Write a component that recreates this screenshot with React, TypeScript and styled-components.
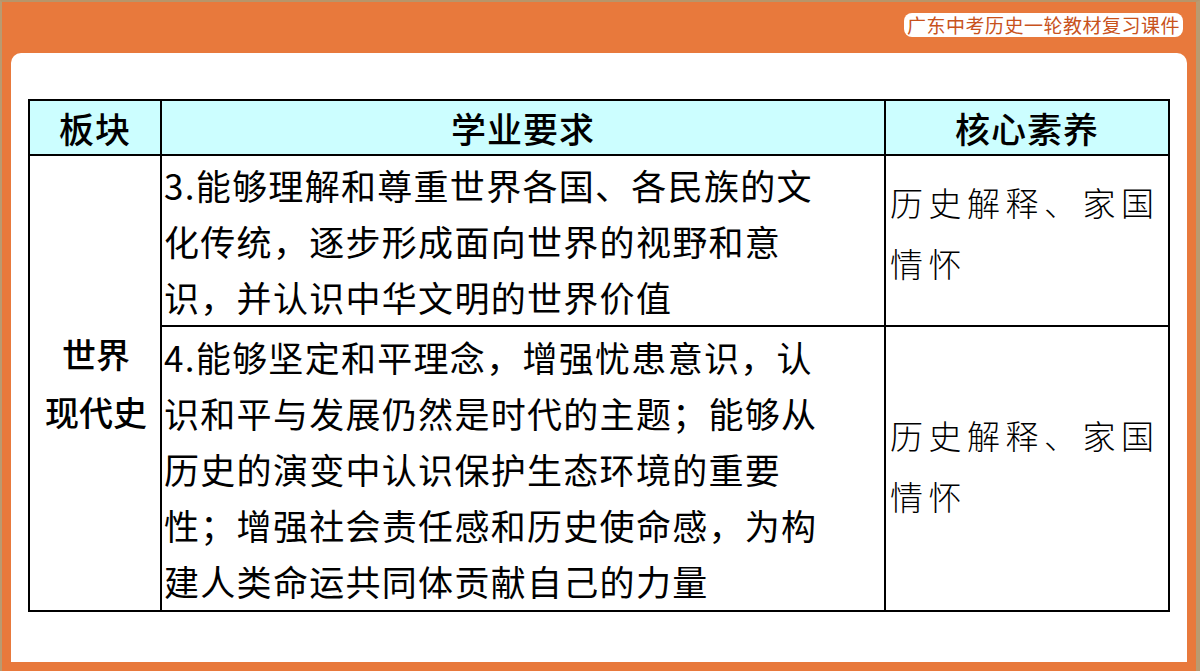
import React from "react";
import styled, { createGlobalStyle } from "styled-components";

const G = createGlobalStyle`
  html,body{margin:0;padding:0;}
  body{width:1200px;height:671px;overflow:hidden;background:#e8783b;font-family:"Noto Sans CJK SC","Liberation Sans",sans-serif;}
`;
const Frame = styled.div`
  width:1200px;height:671px;box-sizing:border-box;background:#e8793c;
  border-top:2px solid #b7956a;border-left:2px solid #b99a70;border-right:4px solid #b99a70;
  display:flex;flex-direction:column;padding:0 9px 9px 9px;
`;
const Top = styled.div`height:51px;display:flex;justify-content:flex-end;align-items:flex-start;padding-top:11px;box-sizing:border-box;`;
const Badge = styled.div`
  background:#fff;color:#c8521c;font-size:19px;line-height:24px;padding:0 3px;border-radius:8px;margin-right:4px;letter-spacing:0.5px;
`;
const Panel = styled.div`flex:1;background:#fff;border-radius:10px 10px 0 0;padding:46px 15px 0 17px;`;
const Table = styled.table`border-collapse:collapse;width:1142px;table-layout:fixed;color:#000;`;
const Th = styled.th<{ w?: number }>`
  background:#ccfeff;border:2px solid #000;height:53px;font-size:35px;font-weight:500;padding:0;line-height:50px;
  letter-spacing:1px;
  ${p => p.w ? `width:${p.w}px;` : ""}
`;
const Td = styled.td<{ h: number; serif?: boolean; center?: boolean }>`
  border:2px solid #000;height:${p => p.h}px;box-sizing:border-box;
  padding:${p => p.serif ? "16px 0 0 4px" : "0 0 0 2px"};
  font-size:${p => p.center ? 34 : 35}px;line-height:56px;white-space:nowrap;overflow:hidden;
  vertical-align:${p => p.serif ? "top" : "middle"};
  letter-spacing:${p => p.center ? "0" : "1.3px"};
  text-align:${p => p.center ? "center" : "left"};font-weight:${p => p.center ? 500 : 400};
  ${p => p.serif ? "letter-spacing:5.5px;font-size:33px;font-weight:300;" : ""}
  ${p => p.center ? "line-height:58px;" : ""}
`;
const Cell2 = styled.div<{ pt: number }>`line-height:61px;padding-top:${p => p.pt}px;`;

export default function App() {
  return (
    <Frame>
      <G />
      <Top><Badge>广东中考历史一轮教材复习课件</Badge></Top>
      <Panel>
        <Table>
          <thead>
            <tr><Th w={130}>板块</Th><Th w={722}>学业要求</Th><Th>核心素养</Th></tr>
          </thead>
          <tbody>
            <tr>
              <Td h={171} center rowSpan={2}>世界<br />现代史</Td>
              <Td h={171}>3.能够理解和尊重世界各国、各民族的文<br />化传统，逐步形成面向世界的视野和意<br />识，并认识中华文明的世界价值</Td>
              <Td h={171} serif><Cell2 pt={0}>历史解释、家国<br />情怀</Cell2></Td>
            </tr>
            <tr>
              <Td h={285}>4.能够坚定和平理念，增强忧患意识，认<br />识和平与发展仍然是时代的主题；能够从<br />历史的演变中认识保护生态环境的重要<br />性；增强社会责任感和历史使命感，为构<br />建人类命运共同体贡献自己的力量</Td>
              <Td h={285} serif><Cell2 pt={62}>历史解释、家国<br />情怀</Cell2></Td>
            </tr>
          </tbody>
        </Table>
      </Panel>
    </Frame>
  );
}
